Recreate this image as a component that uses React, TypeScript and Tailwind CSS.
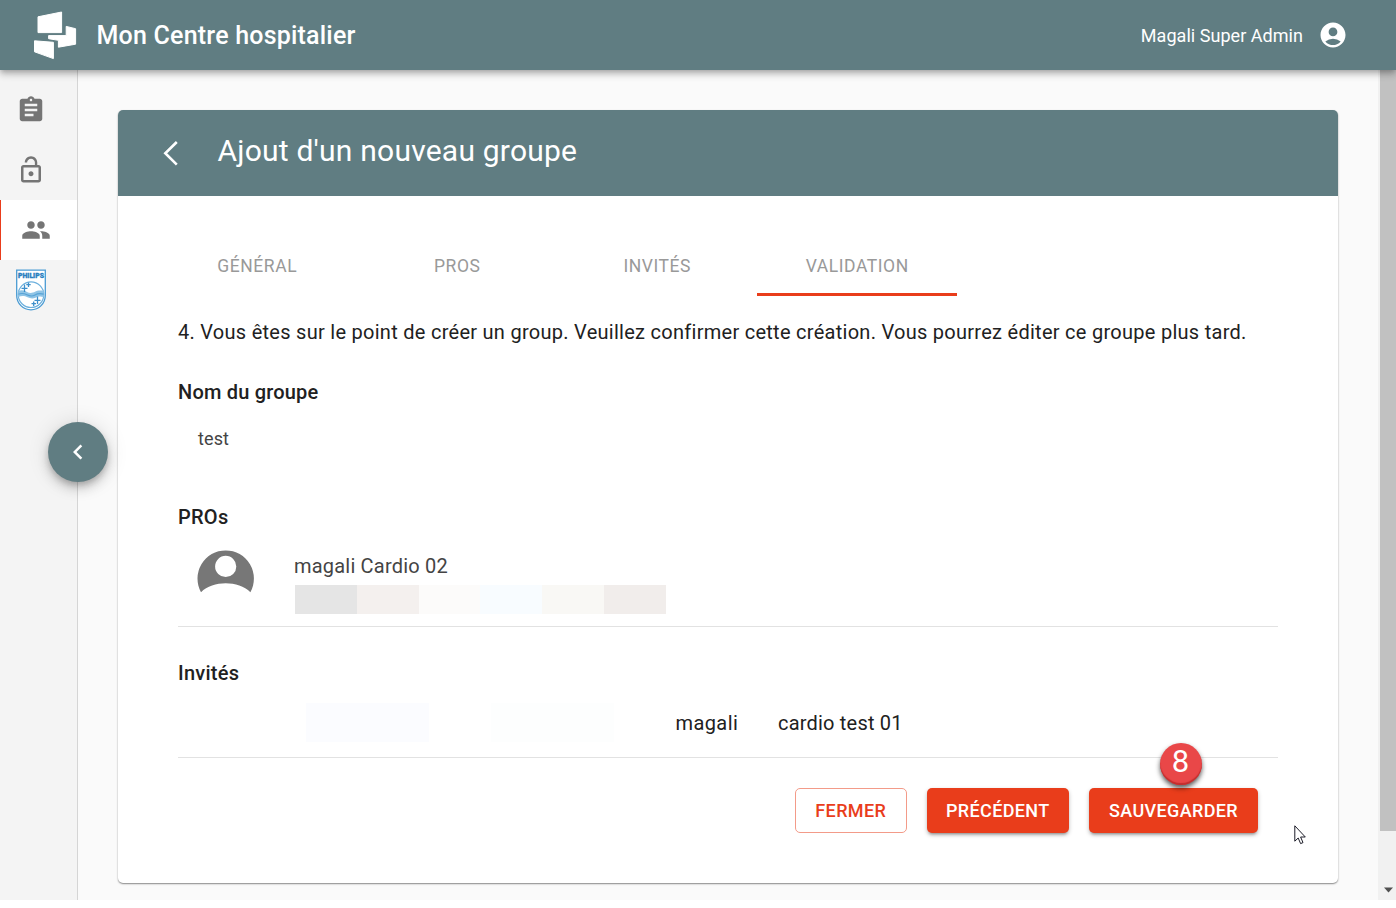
import React from "react";
import { MdAccountCircle, MdAssignment, MdChevronLeft, MdLockOpen, MdPeople } from "react-icons/md";

function Logo() {
  return (
    <svg width="44" height="50" viewBox="33 10 44 50" fill="#fff" stroke="#fff" strokeWidth="1" strokeLinejoin="round">
      <path d="M38 16.8 61.6 12V32.6H38Z" />
      <path d="M66.2 26.4 75.6 28.7V44.2L58.4 47.2V40.3L48.6 38.7V35.6H66.2Z" />
      <path d="M34.5 40.8 53.4 42.3V58.6L34.5 51.8Z" />
    </svg>
  );
}

function Shield() {
  return (
    <svg width="30" height="42" viewBox="0 0 30 42">
      <path d="M.7 1.2H29.3V26.5A14.3 14.3 0 0 1 .7 26.5Z" fill="#fff" stroke="#4a9bd3" strokeWidth="1.3" />
      <text x="15" y="9" textAnchor="middle" textLength="26" lengthAdjust="spacingAndGlyphs" fontSize="7" fontWeight="900" fill="#2a80bf" stroke="#2a80bf" strokeWidth=".3" fontFamily="Roboto, sans-serif">PHILIPS</text>
      <circle cx="15" cy="25.7" r="12.8" fill="#fff" stroke="#6db0dd" strokeWidth="1.2" />
      <path d="M2.3 22C6 20.5 8.5 21.5 11 23S17 24 19 22.800 24 21 27.700 22V28C24 27 22 27.500 19.500 28.700S14 29.500 11.500 28.300 6 26.500 2.300 28Z" fill="#8fc4e6" />
      <path d="M2.300 25.200C6 23.800 8.500 24.500 11 25.800S17 27.200 19 26 24 24.200 27.700 25.200" stroke="#57a3d6" strokeWidth="1.200" fill="none" />
      <path d="M8.500 15.500V23M5.500 19.300H11.500M12.500 13.500V18M10.300 15.700H14.700M21.500 27.500V35M18.500 31.300H24.500M17.700 32.500V37M15.500 34.700H20" stroke="#3d8fcb" strokeWidth="1.300" fill="none" />
    </svg>
  );
}

function BackArrow() {
  return (
    <svg width="30" height="30" viewBox="0 0 30 30" fill="none" stroke="#fff" strokeWidth="2.6">
      <path d="M20.800 4 9.300 15.300 20.800 26.600" />
    </svg>
  );
}

function Avatar() {
  return (
    <svg width="57" height="44" viewBox="0 0 57 44">
      <path fillRule="evenodd" d="M4 42.2A28.2 28.2 0 1 1 53.400 42.2C41.400 30.3 16 30.3 4 42.2ZM28.700 5.8a10.6 10.6 0 1 0 0 21.2 10.6 10.6 0 0 0 0-21.2Z" fill="#777" />
    </svg>
  );
}

const tabs = ["GÉNÉRAL", "PROS", "INVITÉS", "VALIDATION"];
const redacted = ["bg-[#e5e5e5]", "bg-[#f4f0ee]", "bg-[#fcfbfa]", "bg-[#f8fcff]", "bg-[#f9f8f5]", "bg-[#f1edeb]"];

export default function App() {
  return (
    <div className="h-[908px] w-[1396px] overflow-hidden bg-white font-[Roboto,sans-serif] text-[#212121]">
      <div className="relative flex h-[900px] flex-col bg-[#fafafa]">
        <header className="z-10 flex h-[70px] shrink-0 items-center bg-[#607d82] pr-12 pl-[33px] text-white shadow-[0_2px_5px_-1px_rgba(0,0,0,.2),0_5px_6px_rgba(0,0,0,.14),0_1px_12px_rgba(0,0,0,.12)]">
          <Logo />
          <h1 className="ml-[19.5px] pt-[2px] text-[25px] font-medium tracking-[0.21px]">Mon Centre hospitalier</h1>
          <span className="ml-auto pt-px text-[18px] tracking-[0.04px]">Magali Super Admin</span>
          <MdAccountCircle className="ml-[15px] size-[30px]" />
        </header>

        <div className="flex min-h-0 flex-1">
          <nav className="relative flex w-[78px] shrink-0 flex-col border-r border-[#d5d5d5] bg-[#f4f4f4] pt-[10px] text-[#757575]">
            <a className="flex h-[60px] items-center pl-4"><MdAssignment className="size-[30px]" /></a>
            <a className="flex h-[60px] items-center pl-4"><MdLockOpen className="size-[30px]" /></a>
            <a className="flex h-[60px] items-center border-l border-[#e93d1b] bg-white pl-5"><MdPeople className="size-[30px]" /></a>
            <a className="flex h-[60px] items-center pl-4"><Shield /></a>
            <button className="absolute top-[351.5px] left-12 z-10 flex size-[60px] items-center justify-center rounded-full bg-[#607d82] text-white shadow-[0_4px_6px_-1px_rgba(0,0,0,.2),0_7px_12px_rgba(0,0,0,.14),0_1px_22px_rgba(0,0,0,.12)]">
              <MdChevronLeft className="size-[30px]" />
            </button>
          </nav>

          <main className="flex-1 pt-10 pl-10">
            <section className="h-[773px] w-[1220px] overflow-hidden rounded-[5px] bg-white shadow-[0_1px_2px_rgba(0,0,0,.32),0_1px_1px_rgba(0,0,0,.18)]">
              <div className="flex h-[85.5px] items-center bg-[#607d82] pl-[37.5px] text-white">
                <BackArrow />
                <h2 className="ml-8 -mt-[5px] text-[30px] tracking-[0.22px]">Ajout d'un nouveau groupe</h2>
              </div>
              <div className="px-[60px] pt-[40px]">
                <div className="-ml-[21px] flex">
                  {tabs.map((t) => (
                    <div key={t} className={`flex h-[60px] w-[200px] items-center justify-center border-b-3 pt-[5px] pl-[0.5px] text-[17.5px] tracking-[0.55px] text-[#999] ${t === "VALIDATION" ? "border-[#e93d1b]" : "border-transparent"}`}>{t}</div>
                  ))}
                </div>
                <p className="mt-[21.5px] h-[30px] whitespace-nowrap text-[20px] leading-[30px] tracking-[0.275px]">4. Vous êtes sur le point de créer un group. Veuillez confirmer cette création. Vous pourrez éditer ce groupe plus tard.</p>
                <h3 className="mt-[30px] text-[20px] leading-[30px] font-medium tracking-[0.2px]">Nom du groupe</h3>
                <p className="mt-[16.5px] pl-5 text-[18px] leading-[30px] tracking-[0.1px] text-[#444]">test</p>
                <h3 className="mt-[48px] text-[20px] leading-[30px] font-medium tracking-[0.25px]">PROs</h3>
                <div className="flex h-[95px] border-b border-[#e2e2e2] pl-[19px]">
                  <div className="pt-[18px]"><Avatar /></div>
                  <div className="ml-[40px] pt-[19.5px]">
                    <p className="text-[20px] leading-[30px] tracking-[0.2px] text-[#444]">magali Cardio 02</p>
                    <div className="ml-px mt-[4px] flex h-[29px] w-[371px]">
                      {redacted.map((c) => <span key={c} className={`flex-1 ${c}`} />)}
                    </div>
                  </div>
                </div>
                <h3 className="mt-[31px] text-[20px] leading-[30px] font-medium tracking-[0.25px]">Invités</h3>
                <div className="flex h-[70px] items-center border-b border-[#e2e2e2] pl-32 text-[20px]">
                  <span className="h-[39px] w-[123px] bg-[#fbfcff]" />
                  <span className="ml-[62px] h-[39px] w-[123px] bg-[#fdfefe]" />
                  <span className="ml-[61.5px] w-[102.5px] pt-px tracking-[0.4px]">magali</span>
                  <span className="pt-px tracking-[0.2px]">cardio test 01</span>
                </div>
                <div className="mt-[30px] flex justify-end gap-5 pr-5 text-[18px] font-medium tracking-[0.35px]">
                  <button className="h-[45px] w-[111.5px] rounded-[5px] border border-[#f39b89] text-[#e93d1b]">FERMER</button>
                  <button className="h-[45px] w-[142.5px] rounded-[5px] bg-[#e93d1b] text-white shadow-[0_3px_3px_-2px_rgba(0,0,0,.3),0_2px_4px_rgba(0,0,0,.25)]">PRÉCÉDENT</button>
                  <button className="relative h-[45px] w-[169px] rounded-[5px] bg-[#e93d1b] text-white shadow-[0_3px_3px_-2px_rgba(0,0,0,.3),0_2px_4px_rgba(0,0,0,.25)]">
                    SAUVEGARDER
                    <span className="absolute -top-[45px] left-[70.5px] flex size-[42px] items-center justify-center rounded-full bg-[#e94748] pb-[2px] text-[31px] font-normal tracking-normal shadow-[inset_0_-2px_1px_#c22e2e,0_3px_5px_rgba(0,0,0,.65)]">8</span>
                  </button>
                </div>
              </div>
            </section>
          </main>

          <aside className="flex w-[18px] flex-col bg-[#f1f1f1] pl-[2px]">
            <div className="h-[761px] bg-[#c1c1c1]" />
            <svg className="mt-[56px] ml-1" width="10" height="6" viewBox="0 0 10 6"><path d="M0 .5H9L4.5 5.5Z" fill="#505050" /></svg>
          </aside>
        </div>
        <svg className="absolute top-[825px] left-[1294px] z-20" width="13" height="20" viewBox="0 0 13 20">
          <path d="M.8.8V16.2L4.2 13 6.6 18.6 9 17.6 6.6 12H11.3Z" fill="#fff" stroke="#1c1c28" strokeWidth="1" />
        </svg>
      </div>
    </div>
  );
}
